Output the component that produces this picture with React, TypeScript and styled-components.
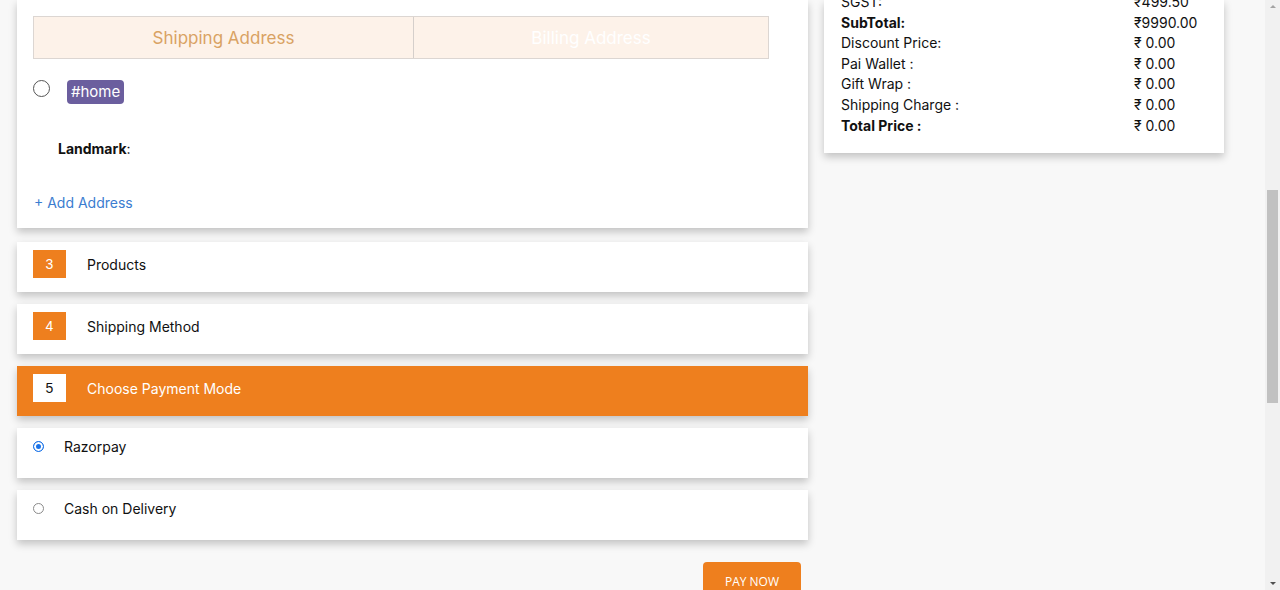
import React from "react";
import styled, { createGlobalStyle } from "styled-components";

const GlobalStyle = createGlobalStyle`
  html, body {
    margin: 0;
    padding: 0;
    height: 590px;
    overflow: hidden;
    background: #f8f8f8;
    font-family: "Inter", "Noto Sans", sans-serif;
    color: #111;
  }
`;

const ORANGE = "#ee7f1e";

const S = {
  Viewport: styled.div`
    display: flex;
    width: 1280px;
    height: 590px;
    overflow: hidden;
  `,
  Page: styled.div`
    flex: 1;
    display: flex;
    align-items: flex-start;
    gap: 16px;
    padding-left: 17px;
  `,
  LeftColumn: styled.div`
    width: 791px;
    display: flex;
    flex-direction: column;
    gap: 12px;
  `,
  AddressCard: styled.div`
    background: #fff;
    box-shadow: 0 4px 8px rgba(0, 0, 0, 0.22);
    padding: 16px 16px 17px;
    margin-bottom: 2px;
  `,
  Tabs: styled.div`
    display: grid;
    grid-template-columns: 379px 1fr;
    width: 736px;
    height: 43px;
    border: 1px solid #dcd6d2;
    box-sizing: border-box;
  `,
  Tab: styled.div<{ active?: boolean }>`
    display: flex;
    align-items: center;
    justify-content: center;
    background: #fdf2e9;
    color: ${(p) => (p.active ? "#d9a263" : "#ffffff")};
    font-size: 17px;
    border-left: ${(p) => (p.active ? "none" : "1px solid #d5cfcb")};
  `,
  AddressRow: styled.div`
    display: flex;
    align-items: flex-start;
    gap: 17px;
    margin-top: 21px;
  `,
  BigRadio: styled.span`
    width: 15px;
    height: 15px;
    border: 1px solid #555;
    border-radius: 50%;
    flex: none;
  `,
  Tag: styled.span`
    background: #6b5e9e;
    color: #fff;
    font-size: 15px;
    padding: 3px 4px;
    border-radius: 4px;
    line-height: 18px;
  `,
  Landmark: styled.div`
    margin: 36px 0 0 25px;
    font-size: 14px;
    b {
      font-weight: 700;
    }
  `,
  AddLink: styled.a`
    display: block;
    margin: 37px 0 0 1px;
    font-size: 14px;
    color: #3b7dd0;
    text-decoration: none;
  `,
  StepCard: styled.div<{ active?: boolean }>`
    display: flex;
    align-items: center;
    height: 50px;
    box-sizing: border-box;
    padding: 0 16px 6px;
    background: ${(p) => (p.active ? ORANGE : "#fff")};
    color: ${(p) => (p.active ? "#fff" : "#111")};
    box-shadow: 0 4px 8px rgba(0, 0, 0, 0.22);
    font-size: 14px;
  `,
  StepNumber: styled.span<{ active?: boolean }>`
    width: 33px;
    height: 28px;
    display: flex;
    align-items: center;
    justify-content: center;
    margin-right: 21px;
    background: ${(p) => (p.active ? "#fff" : ORANGE)};
    color: ${(p) => (p.active ? "#111" : "#fff")};
    font-family: "Liberation Sans", Arial, sans-serif;
    font-size: 14px;
  `,
  PayOption: styled.label`
    display: flex;
    align-items: center;
    height: 50px;
    box-sizing: border-box;
    padding: 0 16px 13px 16px;
    background: #fff;
    box-shadow: 0 4px 8px rgba(0, 0, 0, 0.22);
    font-size: 14px;
  `,
  SmallRadio: styled.span<{ checked?: boolean }>`
    width: 11px;
    height: 11px;
    border-radius: 50%;
    margin-right: 20px;
    box-sizing: border-box;
    border: ${(p) => (p.checked ? "1px solid #1a73e8" : "1px solid #8a8a8a")};
    background: ${(p) => (p.checked ? "#1a73e8" : "#fff")};
    box-shadow: ${(p) => (p.checked ? "inset 0 0 0 2px #fff" : "none")};
  `,
  Actions: styled.div`
    display: flex;
    justify-content: flex-end;
    padding: 10px 7px 0 0;
  `,
  PayButton: styled.button`
    width: 98px;
    height: 38px;
    border: none;
    border-radius: 4px;
    background: ${ORANGE};
    color: #fff;
    font-family: "Open Sans", "Liberation Sans", sans-serif;
    font-size: 12px;
    padding: 0;
  `,
  Summary: styled.div`
    width: 400px;
    background: #fff;
    box-shadow: 0 4px 8px rgba(0, 0, 0, 0.22);
    padding: 0 17px 17px;
    box-sizing: border-box;
  `,
  SummaryList: styled.div`
    margin-top: -8px;
    display: flex;
    flex-direction: column;
  `,
  SummaryRow: styled.div<{ strong?: boolean }>`
    display: grid;
    grid-template-columns: 293px 1fr;
    font-size: 14px;
    line-height: 20.6px;
    font-weight: ${(p) => (p.strong ? 700 : 400)};
    color: #111;
  `,
  Value: styled.span`
    font-weight: 400;
  `,
  Scrollbar: styled.div`
    width: 15px;
    height: 590px;
    background: #f1f1f1;
    display: flex;
    flex-direction: column;
    align-items: center;
    justify-content: space-between;
    padding: 5px 0;
    box-sizing: border-box;
    position: relative;
  `,
  Arrow: styled.span<{ up?: boolean }>`
    width: 0;
    height: 0;
    border-left: 3px solid transparent;
    border-right: 3px solid transparent;
    ${(p) =>
      p.up ? "border-bottom: 3px solid #a3a3a3;" : "border-top: 3px solid #505050;"}
  `,
  Thumb: styled.span`
    position: absolute;
    left: 2px;
    top: 190px;
    width: 11px;
    height: 213px;
    background: #c1c1c1;
  `,
};

const summary: { label: string; value: string; strong?: boolean }[] = [
  { label: "SGST:", value: "₹499.50" },
  { label: "SubTotal:", value: "₹9990.00", strong: true },
  { label: "Discount Price:", value: "₹ 0.00" },
  { label: "Pai Wallet :", value: "₹ 0.00" },
  { label: "Gift Wrap :", value: "₹ 0.00" },
  { label: "Shipping Charge :", value: "₹ 0.00" },
  { label: "Total Price :", value: "₹ 0.00", strong: true },
];

const App: React.FC = () => {
  return (
    <S.Viewport>
      <GlobalStyle />
      <S.Page>
        <S.LeftColumn>
          <S.AddressCard>
            <S.Tabs>
              <S.Tab active>Shipping Address</S.Tab>
              <S.Tab>Billing Address</S.Tab>
            </S.Tabs>
            <S.AddressRow>
              <S.BigRadio />
              <S.Tag>#home</S.Tag>
            </S.AddressRow>
            <S.Landmark>
              <b>Landmark</b>:
            </S.Landmark>
            <S.AddLink href="#">+ Add Address</S.AddLink>
          </S.AddressCard>
          <S.StepCard>
            <S.StepNumber>3</S.StepNumber>
            Products
          </S.StepCard>
          <S.StepCard>
            <S.StepNumber>4</S.StepNumber>
            Shipping Method
          </S.StepCard>
          <S.StepCard active>
            <S.StepNumber active>5</S.StepNumber>
            Choose Payment Mode
          </S.StepCard>
          <S.PayOption>
            <S.SmallRadio checked />
            Razorpay
          </S.PayOption>
          <S.PayOption>
            <S.SmallRadio />
            Cash on Delivery
          </S.PayOption>
          <S.Actions>
            <S.PayButton>PAY NOW</S.PayButton>
          </S.Actions>
        </S.LeftColumn>
        <S.Summary>
          <S.SummaryList>
            {summary.map((row) => (
              <S.SummaryRow key={row.label} strong={row.strong}>
                <span>{row.label}</span>
                <S.Value>{row.value}</S.Value>
              </S.SummaryRow>
            ))}
          </S.SummaryList>
        </S.Summary>
      </S.Page>
      <S.Scrollbar>
        <S.Arrow up />
        <S.Thumb />
        <S.Arrow />
      </S.Scrollbar>
    </S.Viewport>
  );
};

export default App;
